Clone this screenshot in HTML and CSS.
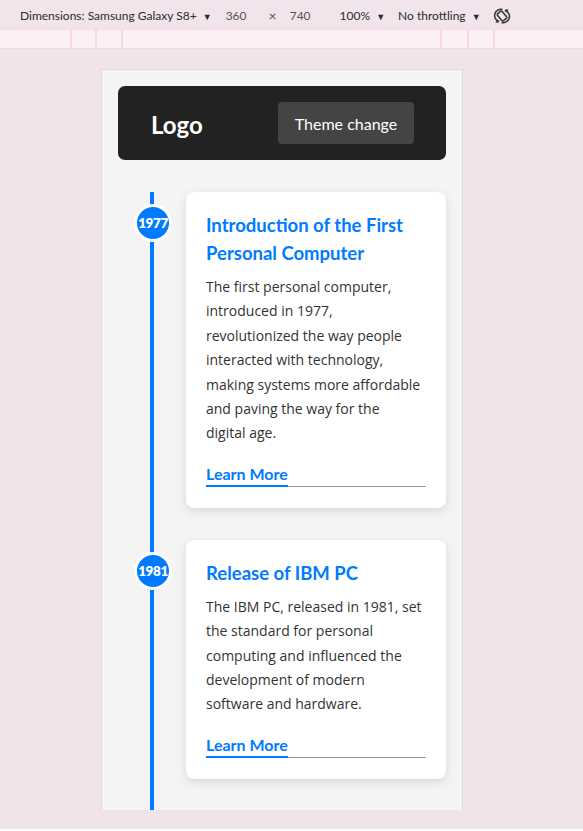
FILE: index.html
```html
<!DOCTYPE html>
<html lang="en">
<head>
<meta charset="utf-8">
<title>Timeline</title>
<link rel="stylesheet" href="styles.css">
</head>
<body>
<div class="devtools">
  <div class="toolbar">
    <span class="tb-item">Dimensions: Samsung Galaxy S8+ <span class="caret">▼</span></span>
    <span class="tb-num w360">360</span>
    <span class="tb-x">×</span>
    <span class="tb-num">740</span>
    <span class="tb-item zoom">100% <span class="caret">▼</span></span>
    <span class="tb-item throttle">No throttling <span class="caret">▼</span></span>
    <svg class="rotate" width="20" height="20" viewBox="0 0 20 20">
      <g fill="none" stroke="#3a3a3a" stroke-width="1.6" transform="rotate(-40 10 10)">
        <path d="M4.2 12.5 A6.2 6.2 0 0 1 14.5 5.4"/>
        <path d="M15.8 7.5 A6.2 6.2 0 0 1 5.5 14.6"/>
        <rect x="7" y="5.5" width="6" height="9" rx="1.2"/>
      </g>
      <path d="M13.6 3.2 L16.6 3.6 L14.4 6.4 Z" fill="#3a3a3a"/>
      <path d="M6.4 16.8 L3.4 16.4 L5.6 13.6 Z" fill="#3a3a3a"/>
    </svg>
  </div>
  <div class="ruler">
    <div class="seg s1"></div><div class="seg s2"></div><div class="seg s3"></div><div class="seg s4"></div><div class="seg s5"></div><div class="seg s6"></div><div class="seg s7"></div>
  </div>
</div>

<div class="stage">
  <div class="device">
    <header class="header">
      <div class="logo">Logo</div>
      <button class="theme-btn">Theme change</button>
    </header>

    <div class="timeline">
      <div class="item">
        <div class="badge">1977</div>
        <div class="card">
          <h2 class="card-title">Introduction of the First Personal Computer</h2>
          <p class="card-text">The first personal computer, introduced in 1977, revolutionized the way people interacted with technology, making systems more affordable and paving the way for the digital&nbsp;age.</p>
          <div class="more"><a class="more-link" href="#">Learn More</a></div>
        </div>
      </div>
      <div class="item">
        <div class="badge">1981</div>
        <div class="card">
          <h2 class="card-title">Release of IBM PC</h2>
          <p class="card-text">The IBM PC, released in 1981, set the standard for personal computing and influenced the development of modern software&nbsp;and hardware.</p>
          <div class="more"><a class="more-link" href="#">Learn More</a></div>
        </div>
      </div>
    </div>
  </div>
</div>
</body>
</html>
```
FILE: styles.css
```css
* { box-sizing: border-box; }
html, body { margin: 0; padding: 0; }
body {
  width: 583px;
  height: 831px;
  background: #ffffff;
  font-family: "Lato", "Liberation Sans", sans-serif;
  overflow: hidden;
}
.devtools {
  background: #f1e5eb;
  padding-top: 2px;
}
.toolbar {
  height: 27px;
  display: flex;
  align-items: center;
  padding-left: 20px;
  font-family: "Lato", "Liberation Sans", sans-serif;
  font-size: 12px;
  color: #2b2b2b;
}
.caret { font-size: 9px; margin-left: 3px; }
.tb-num { color: #555; }
.w360 { margin-left: 14px; }
.tb-x { color: #555; margin-left: 22px; margin-right: 13px; font-size: 14px; }
.zoom { margin-left: 29px; }
.throttle { margin-left: 13px; }
.rotate { margin-left: 11px; }
.ruler {
  height: 20px;
  background: #fcf0f5;
  border-top: 1px solid #f7d8e2;
  border-bottom: 1px solid #f7d8e2;
  display: flex;
}
.seg { height: 100%; border-right: 2px solid #f9d7e1; }
.s1 { width: 72px; }
.s2 { width: 25px; }
.s3 { width: 26px; }
.s4 { width: 319px; }
.s5 { width: 27px; }
.s6 { width: 26px; }
.s7 { width: 0; border-right: none; }

.stage {
  background: #f0e3e9;
  height: 780px;
  padding: 20px 0 0 101px;
}
.device {
  width: 362px;
  height: 741px;
  background: #f4f4f4;
  border: 1px solid #e0dadd;
  border-bottom: none;
  padding: 16px 16px 0 16px;
  overflow: hidden;
  font-family: "Lato", "Liberation Sans", sans-serif;
}
.header {
  height: 74px;
  background: #222222;
  border-radius: 7px;
  display: flex;
  align-items: center;
  justify-content: space-between;
  padding: 0 32px 0 33px;
}
.logo {
  color: #ffffff;
  font-size: 24px;
  font-weight: 700;
  margin-top: 2px;
}
.theme-btn {
  background: #444444;
  color: #ffffff;
  border: none;
  border-radius: 4px;
  font-family: inherit;
  font-size: 16px;
  height: 42px;
  padding: 0 16px;
  width: 136px;
}

.timeline {
  position: relative;
  margin-top: 32px;
  padding-left: 68px;
  padding-bottom: 60px;
}
.timeline::before {
  content: "";
  position: absolute;
  left: 32px;
  top: 0;
  bottom: 0;
  width: 4px;
  background: #007bff;
}
.item {
  position: relative;
  margin-bottom: 32px;
}
.badge {
  position: absolute;
  left: -52px;
  top: 12px;
  width: 38px;
  height: 38px;
  border-radius: 50%;
  background: #007bff;
  border: 3px solid #ffffff;
  color: #ffffff;
  font-size: 13.5px;
  font-weight: 800;
  display: flex;
  align-items: center;
  justify-content: center;
  letter-spacing: -0.4px;
}
.card {
  background: #ffffff;
  border-radius: 8px;
  box-shadow: 0 3px 10px rgba(0, 0, 0, 0.12);
  padding: 19px 20px 21px 20px;
}
.card-title {
  margin: 0 0 8px 0;
  color: #007bff;
  font-size: 18.5px;
  font-weight: 700;
  line-height: 28px;
}
.card-text {
  margin: 0 0 17px 0;
  color: #333333;
  font-family: "Open Sans", "Noto Sans", sans-serif;
  font-size: 14px;
  line-height: 24.4px;
}
.more {
  border-bottom: 1px solid #999999;
  line-height: 22px;
}
.more-link {
  display: inline-block;
  color: #007bff;
  font-size: 16px;
  font-weight: 700;
  text-decoration: none;
  border-bottom: 2px solid #007bff;
  margin-bottom: -1px;
}
```
